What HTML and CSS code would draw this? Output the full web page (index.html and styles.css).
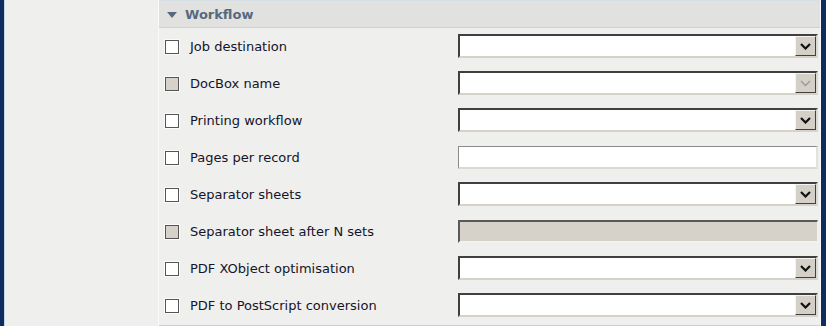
FILE: index.html
```html
<!DOCTYPE html>
<html lang="en">
<head>
    <meta charset="UTF-8">
    <title>Workflow</title>
    <link rel="stylesheet" href="styles.css">
</head>
<body>
    <div class="page">
        <div class="nav-bar"></div>
        <div class="left-area"></div>

        <!-- Panel with the workflow settings -->
        <div class="panel">
            <div class="panel-header">
                <span class="caret"></span>
                <span class="panel-title">Workflow</span>
            </div>

            <div class="row">
                <label class="row-label"><span class="check"></span>Job destination</label>
                <div class="select"><span class="drop"><svg viewBox="0 0 11 7" width="11" height="7"><path d="M1 1 L5.5 5.5 L10 1" fill="none" stroke="#111" stroke-width="2.2"/></svg></span></div>
            </div>
            <div class="row">
                <label class="row-label"><span class="check disabled"></span>DocBox name</label>
                <div class="select"><span class="drop"><svg viewBox="0 0 11 7" width="11" height="7"><path d="M1 1 L5.5 5.5 L10 1" fill="none" stroke="#9a9a9a" stroke-width="1.4"/></svg></span></div>
            </div>
            <div class="row">
                <label class="row-label"><span class="check"></span>Printing workflow</label>
                <div class="select"><span class="drop"><svg viewBox="0 0 11 7" width="11" height="7"><path d="M1 1 L5.5 5.5 L10 1" fill="none" stroke="#111" stroke-width="2.2"/></svg></span></div>
            </div>
            <div class="row">
                <label class="row-label"><span class="check"></span>Pages per record</label>
                <div class="text-input"></div>
            </div>
            <div class="row">
                <label class="row-label"><span class="check"></span>Separator sheets</label>
                <div class="select"><span class="drop"><svg viewBox="0 0 11 7" width="11" height="7"><path d="M1 1 L5.5 5.5 L10 1" fill="none" stroke="#111" stroke-width="2.2"/></svg></span></div>
            </div>
            <div class="row">
                <label class="row-label"><span class="check disabled"></span>Separator sheet after N sets</label>
                <div class="text-input disabled"></div>
            </div>
            <div class="row">
                <label class="row-label"><span class="check"></span>PDF XObject optimisation</label>
                <div class="select"><span class="drop"><svg viewBox="0 0 11 7" width="11" height="7"><path d="M1 1 L5.5 5.5 L10 1" fill="none" stroke="#111" stroke-width="2.2"/></svg></span></div>
            </div>
            <div class="row">
                <label class="row-label"><span class="check"></span>PDF to PostScript conversion</label>
                <div class="select"><span class="drop"><svg viewBox="0 0 11 7" width="11" height="7"><path d="M1 1 L5.5 5.5 L10 1" fill="none" stroke="#111" stroke-width="2.2"/></svg></span></div>
            </div>
            <div class="panel-footer"></div>
        </div>

        <div class="nav-bar right"></div>
    </div>
</body>
</html>
```

FILE: styles.css
```css
body {
    margin: 0;
    font-family: "DejaVu Sans", Verdana, sans-serif;
    font-size: 13px;
    background-color: #efefed;
}
/* Main row: blue bars at both edges */
.page {
    display: flex;
    height: 326px;
    overflow: hidden;
}

.nav-bar {
    width: 4px;
    background-color: #0c2d5e;
    border-right: 1px solid #c9d6e6;
}

    .nav-bar.right {
        width: 5px;
        border-right: none;
        border-left: 1px solid #f7f7f7;
    }

.left-area {
    width: 153px;
}

.panel {
    flex: 1;
    border-left: 1px solid #fafafa;
    display: flex;
    flex-direction: column;
}
/* Section header */
.panel-header {
    height: 28px;
    box-sizing: border-box;
    background-color: #e1e1df;
    border-top: 1px solid #d4dfe6;
    border-bottom: 1px solid #c6d3dc;
    display: flex;
    align-items: center;
    padding-left: 8px;
}

.caret {
    width: 0;
    height: 0;
    border-left: 5px solid transparent;
    border-right: 5px solid transparent;
    border-top: 6px solid #56697f;
    margin-right: 8px;
    margin-top: 1px;
}

.panel-title {
    font-weight: bold;
    color: #56697f;
}
/* Rows of settings */
.row {
    height: 37px;
    display: flex;
    align-items: center;
    padding-left: 6px;
    padding-right: 2px;
}

.row-label {
    width: 293px;
    display: flex;
    align-items: center;
    color: #14142a;
}

.check {
    width: 12px;
    height: 12px;
    border: 1px solid #555;
    background-color: #fff;
    margin-right: 11px;
    box-shadow: 0 0 0 1px #fbfbfb;
}

    .check.disabled {
        background-color: #d6d2ca;
    }

.select, .text-input {
    flex: 1;
    height: 24px;
    box-sizing: border-box;
    background-color: #fff;
    border-style: solid;
    border-width: 2px;
    border-color: #404040 #dcd9d2 #d6d2ca #404040;
    display: flex;
    justify-content: flex-end;
    margin-top: -1px;
}

.drop {
    width: 21px;
    height: 20px;
    box-sizing: border-box;
    background-color: #d4d0c8;
    border-style: solid;
    border-width: 1px;
    border-color: #f4f3f0 #404040 #404040 #f4f3f0;
    display: flex;
    align-items: center;
    justify-content: center;
}

.text-input {
    height: 23px;
    border-width: 1px 2px 2px 1px;
    border-color: #8a8a8a #e4e2dc #dcd9d2 #8a8a8a;
    margin-top: 0;
}

    .text-input.disabled {
        background-color: #d6d2ca;
        border-width: 2px 1px 2px 2px;
        border-color: #5a5a5a #f2f2f0 #f2f2f0 #5a5a5a;
    }

.panel-footer {
    border-top: 1px solid #c6d3dc;
    margin-top: 1px;
}
```
